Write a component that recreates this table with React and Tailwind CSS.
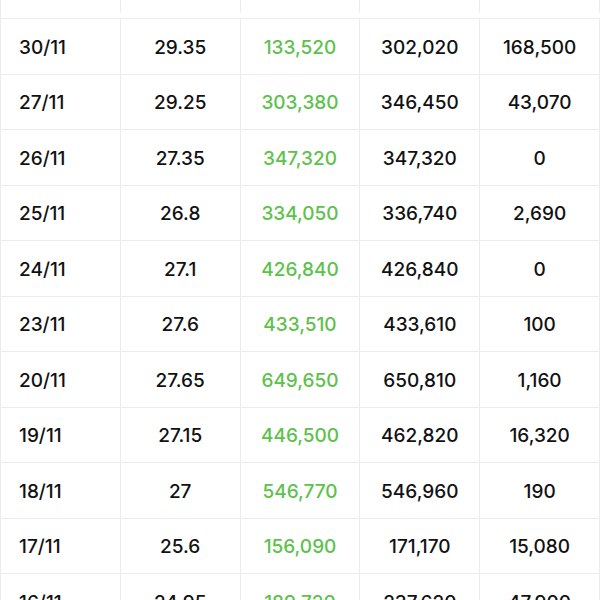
const rows = [
  ["30/11", "29.35", "133,520", "302,020", "168,500"],
  ["27/11", "29.25", "303,380", "346,450", "43,070"],
  ["26/11", "27.35", "347,320", "347,320", "0"],
  ["25/11", "26.8", "334,050", "336,740", "2,690"],
  ["24/11", "27.1", "426,840", "426,840", "0"],
  ["23/11", "27.6", "433,510", "433,610", "100"],
  ["20/11", "27.65", "649,650", "650,810", "1,160"],
  ["19/11", "27.15", "446,500", "462,820", "16,320"],
  ["18/11", "27", "546,770", "546,960", "190"],
  ["17/11", "25.6", "156,090", "171,170", "15,080"],
  ["16/11", "24.95", "189,720", "237,620", "47,900"],
];

const header = ["Ngày", "Giá", "Khối lượng", "Tổng", "Dư"];

const Cell = ({ children, first, green }) => (
  <div
    className={`flex h-full items-center border-r border-[#ececec] pt-[3px] ${
      first ? "justify-start pl-[18px]" : "justify-center"
    } ${green ? "text-[#5cc24b]" : "text-[#111]"}`}
  >
    {children}
  </div>
);

export default function App() {
  return (
    <div className="h-[600px] w-[600px] overflow-hidden bg-white font-['Inter','Liberation_Sans',sans-serif]">
      <div className="-mt-[37px] border-l border-[#ececec] text-[19px] font-medium">
        <div className="grid h-[56px] grid-cols-5 border-b border-[#ececec] pb-[5px]">
          {header.map((h, i) => (
            <Cell key={i} first={i === 0} green={i === 2}>
              {h}
            </Cell>
          ))}
        </div>
        {rows.map((r, idx) => (
          <div
            key={idx}
            className="grid h-[55.5px] grid-cols-5 border-b border-[#ececec]"
          >
            {r.map((v, i) => (
              <Cell key={i} first={i === 0} green={i === 2}>
                {v}
              </Cell>
            ))}
          </div>
        ))}
      </div>
    </div>
  );
}
